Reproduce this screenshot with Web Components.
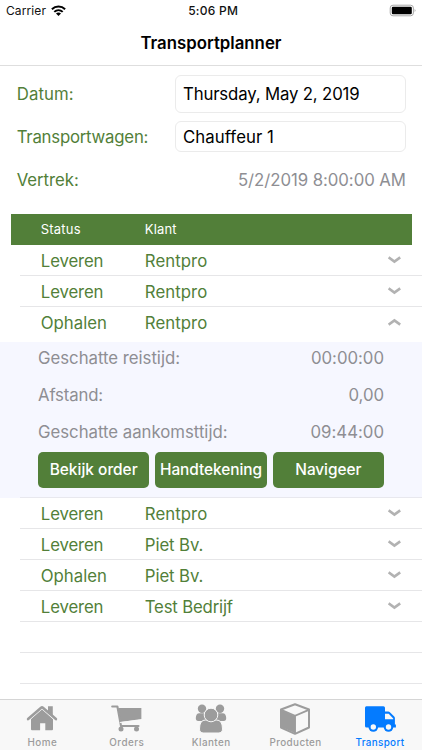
<!DOCTYPE html>
<html lang="nl">
<head>
<meta charset="utf-8">
<title>Transportplanner</title>
<style>
html,body{margin:0;height:100%;background:#fff;overflow:hidden}
body{font-family:Inter,"Liberation Sans",sans-serif}
</style>
</head>
<body>
<planner-app></planner-app>
<script>
// Text label whose tracking is adjusted to give the advance width in "w".
class TrackText extends HTMLElement{
  connectedCallback(){
    const r=this.attachShadow({mode:'open'});
    r.innerHTML='<style>:host{display:inline-block;white-space:nowrap}span{display:inline-block}</style><span></span>';
    const s=r.querySelector('span'),t=this.getAttribute('text');
    s.textContent=t;
    const w=parseFloat(this.getAttribute('w'));
    if(w){
      const gap=(w-s.getBoundingClientRect().width)/t.length;
      s.style.letterSpacing=gap.toFixed(3)+'px';
      s.style.marginRight=(-gap).toFixed(3)+'px';
    }
  }
}
const tt=(t,w)=>`<track-text text="${t}" w="${w}"></track-text>`;

class StatusBar extends HTMLElement{
  connectedCallback(){
    this.attachShadow({mode:'open'}).innerHTML=`<style>
    :host{display:grid;grid-template-columns:1fr auto 1fr;height:22px;line-height:22px;font-size:12px;color:#111;padding:0 5px 0 6px;box-sizing:border-box}
    .l{display:flex;align-items:center;gap:5px}.c{font-weight:500;margin-left:3px}.r{display:flex;justify-content:flex-end}
    svg{display:block}.l svg{margin-top:-2px}
    </style>
    <div class="l">${tt('Carrier',40)}<svg width="15" height="11" viewBox="0 0 15 11"><g fill="none" stroke="#000" stroke-width="2"><path d="M.9 4.3C4.6.7 10.4.7 14.1 4.3"/><path d="M3.3 6.9c2.4-2.3 6-2.3 8.4 0"/></g><path d="M5 8.5c1.4-1.3 3.6-1.3 5 0L7.5 11z"/></svg></div>
    <div class="c">${tt('5:06 PM',50)}</div>
    <div class="r"><svg width="28" height="22" viewBox="0 0 28 22"><rect x="1.2" y="5.2" width="23.2" height="10.6" rx="2.8" fill="#fff" stroke="#aaa"/><rect x="2.8" y="6.8" width="20" height="7.4" rx="1.2"/><path d="M25.7 8.8q1.7 1.6 0 3.4z" fill="#999"/></svg></div>`;
  }
}
class NavBar extends HTMLElement{
  connectedCallback(){
    this.attachShadow({mode:'open'}).innerHTML=`<style>:host{display:block;height:44px;box-sizing:border-box;border-bottom:1px solid #dedede;text-align:center;font-size:16.8px;font-weight:600;line-height:43px;color:#000}</style>${tt('Transportplanner',141)}`;
  }
}
class FormRow extends HTMLElement{
  connectedCallback(){
    const a=n=>this.getAttribute(n);
    this.attachShadow({mode:'open'}).innerHTML=`<style>
    :host{display:flex;justify-content:space-between;align-items:center;padding:0 16px 0 16.7px;color:#527f39;font-size:16.8px;line-height:24px}
    .box{box-sizing:border-box;width:231px;height:var(--h);border:1px solid #ebebeb;border-radius:6px;padding:0 7px;color:#000;display:flex;align-items:center;padding-bottom:var(--lift,1px)}
    .plain{color:#8e8e93}
    </style>${tt(a('label'),a('lw'))}<div class="${a('kind')}">${tt(a('value'),a('vw'))}</div>`;
  }
}
class TableHead extends HTMLElement{
  connectedCallback(){
    this.attachShadow({mode:'open'}).innerHTML=`<style>:host{display:grid;grid-template-columns:104px 1fr;margin:0 10.5px 0 10.5px;height:30.5px;line-height:31px;padding-left:30.3px;background:#527f39;color:#fff;font-size:13px;margin-bottom:.4px}</style>${tt('Status',40)}${tt('Klant',32)}`;
  }
}
class OrderRow extends HTMLElement{
  connectedCallback(){
    const a=n=>this.getAttribute(n),up=this.hasAttribute('open');
    this.attachShadow({mode:'open'}).innerHTML=`<style>
    :host{display:grid;grid-template-columns:104px 1fr 14px;height:30.9px;box-sizing:border-box;margin-left:20px;padding:0 21px 0 20.8px;border-bottom:1px solid #e6e6e8;color:#527f39;font-size:16.8px;line-height:32px}
    :host([open]){height:35.7px;border:0}
    :host([blank]){display:block}
    svg{margin:9px 0 0 .5px}
    </style>${a('status')?tt(a('status'),a('sw'))+tt(a('client'),a('cw'))+`<svg width="13" height="12" viewBox="0 0 13 12"><path d="${up?'M.6 8.6L6.4 4.4l5.8 4.2':'M.6 3.4L6.4 7.6l5.8-4.2'}" fill="none" stroke="#b2b2b2" stroke-width="2.6"/></svg>`:''}`;
  }
}
class DetailLine extends HTMLElement{
  connectedCallback(){
    const a=n=>this.getAttribute(n);
    this.attachShadow({mode:'open'}).innerHTML=`<style>:host{display:flex;justify-content:space-between;height:36.7px;line-height:32px;font-size:16.8px;color:#8e8e93}</style>${tt(a('label'),a('lw'))}${tt(a('value'),a('vw'))}`;
  }
}
class ActionButton extends HTMLElement{
  connectedCallback(){
    this.attachShadow({mode:'open'}).innerHTML=`<style>:host{display:flex;justify-content:center;height:36px;line-height:36px;background:#527f39;color:#fff;border-radius:5px;font-size:15.4px;font-weight:550}</style>${tt(this.getAttribute('label'),this.getAttribute('w'))}`;
  }
}
class OrderDetail extends HTMLElement{
  connectedCallback(){
    this.attachShadow({mode:'open'}).innerHTML=`<style>:host{display:block;box-sizing:border-box;height:156px;background:linear-gradient(#e8e8ee,#e8e8ee) 20px 155px/100% 1px no-repeat,#f6f7ff;padding:0 38px}
    .b{display:grid;grid-template-columns:repeat(3,1fr);gap:6px}</style><slot></slot><div class="b"><slot name="actions"></slot></div>`;
  }
}
const icons={
home:'<path d="M5 17L16 7.5 27 17v10.2q0 1-1 1h-6.7v-7h-5.2v7H6q-1 0-1-1z"/><path d="M1.8 16.8L14.8 5.2q1.2-.8 2.4 0l12.8 11.6" fill="none" stroke="#f8f8f8" stroke-width="4.4"/><path d="M22 4.2h4.8v10.3L22 10z"/><path d="M2.1 17.1L15.1 5.8q.9-.7 1.8 0l13 11.3" fill="none" stroke="currentColor" stroke-width="2.6" stroke-linecap="round"/>',
cart:'<path d="M7.2 6h23.2v11L9.5 20z"/><path d="M1.2 4.5h5.2L10 24h17.5" fill="none" stroke="currentColor" stroke-width="2.1" stroke-linecap="round" stroke-linejoin="round"/><path d="M8.8 20.5l20-2.2" stroke="#f8f8f8" stroke-width="1.1"/><circle cx="10" cy="27" r="2.5"/><circle cx="25.5" cy="27" r="2.5"/>',
users:'<circle cx="7" cy="6.7" r="4.2"/><circle cx="25" cy="6.7" r="4.2"/><path d="M4.5 11.2Q1 11 .8 16q-.1 3 2.5 3H13v-7.8zM27.5 11.2q3.5-.2 3.7 4.8.1 3-2.5 3H19v-7.8z"/><g stroke="#f8f8f8" stroke-width="1"><path d="M10.8 18Q4.5 17.8 4.5 27q0 4 4.3 4h14.4q4.3 0 4.3-4 0-9.2-6.3-9z"/><circle cx="16" cy="13" r="6.8"/></g>',
box:'<path d="M16 2.2l14 5.3v18l-14 6.3L2 25.5v-18z" fill="none" stroke="currentColor" stroke-width="2" stroke-linejoin="round"/><path d="M2 8l14 6.3V31L2 25z"/><path d="M2.2 7.8L16 13.8 29.8 7.8M16 14v17" fill="none" stroke="currentColor" stroke-width="1.9"/>',
truck:'<path fill-rule="evenodd" d="M2.4 4.2h17q1.6 0 1.6 1.6v3.7h3.2q1 0 1.7.7l4.3 4.4q.7.7.7 1.7v6.2h1v3H2.6q-1.6 0-1.6-1.6V5.8q0-1.6 1.4-1.6zM21 11.7v5.6h8.2v-.9l-4.5-4.7z"/><circle cx="9.3" cy="25" r="4.8"/><circle cx="24.5" cy="25" r="4.8"/><g fill="#f8f8f8"><circle cx="9.3" cy="25" r="2.7"/><circle cx="24.5" cy="25" r="2.7"/></g>'};
class TabItem extends HTMLElement{
  connectedCallback(){
    const a=n=>this.getAttribute(n);
    this.attachShadow({mode:'open'}).innerHTML=`<style>:host{display:flex;flex-direction:column;align-items:center;color:#9c9c9c;font-size:9.9px;font-weight:500;line-height:14px;padding-top:2px}:host([active]){color:#047bff;font-weight:550}svg{display:block;fill:currentColor;margin-bottom:.4px}</style><svg width="32" height="33" viewBox="0 0 32 33">${icons[a('icon')]}</svg>${tt(a('label'),a('w'))}`;
  }
}
class TabBar extends HTMLElement{
  connectedCallback(){
    this.attachShadow({mode:'open'}).innerHTML=`<style>:host{display:grid;grid-template-columns:repeat(5,1fr);box-sizing:border-box;height:51px;border-top:1px solid #d5d5d5;background:#f8f8f8}</style><slot></slot>`;
  }
}
class PlannerApp extends HTMLElement{
  connectedCallback(){
    const row=(s,sw,c,cw,x='')=>`<order-row status="${s}" sw="${sw}" client="${c}" cw="${cw}" ${x}></order-row>`;
    this.attachShadow({mode:'open'}).innerHTML=`<style>
    :host{display:flex;flex-direction:column;height:750px;width:422px;overflow:hidden;background:#fff}
    .form{padding-top:9px;height:139px}
    .date{--h:38px}.driver{--h:31px;--lift:0px;margin-top:8px}.dep{margin-top:16px}
    .list{flex:1;min-height:0}
    </style>
    <status-bar></status-bar><nav-bar></nav-bar>
    <div class="form">
    <form-row class="date" label="Datum:" lw="57" value="Thursday, May 2, 2019" vw="176.5" kind="box"></form-row>
    <form-row class="driver" label="Transportwagen:" lw="131.5" value="Chauffeur 1" vw="91" kind="box"></form-row>
    <form-row class="dep" label="Vertrek:" lw="62" value="5/2/2019 8:00:00 AM" vw="168" kind="plain"></form-row>
    </div>
    <table-head></table-head>
    <div class="list">
    ${row('Leveren',62.5,'Rentpro',62.5)}${row('Leveren',62.5,'Rentpro',62.5)}${row('Ophalen',66,'Rentpro',62.5,'open')}
    <order-detail>
      <detail-line label="Geschatte reistijd:" lw="142" value="00:00:00" vw="73"></detail-line>
      <detail-line label="Afstand:" lw="65" value="0,00" vw="35.5"></detail-line>
      <detail-line label="Geschatte aankomsttijd:" lw="189.5" value="09:44:00" vw="73.5"></detail-line>
      <action-button slot="actions" label="Bekijk order" w="88"></action-button>
      <action-button slot="actions" label="Handtekening" w="102"></action-button>
      <action-button slot="actions" label="Navigeer" w="66"></action-button>
    </order-detail>
    ${row('Leveren',62.5,'Rentpro',62.5)}${row('Leveren',62.5,'Piet Bv.',58.5)}${row('Ophalen',66,'Piet Bv.',58.5)}${row('Leveren',62.5,'Test Bedrijf',88)}
    <order-row blank></order-row><order-row blank></order-row>
    </div>
    <tab-bar>
    <tab-item icon="home" label="Home" w="30"></tab-item><tab-item icon="cart" label="Orders" w="35"></tab-item><tab-item icon="users" label="Klanten" w="39"></tab-item><tab-item icon="box" label="Producten" w="52"></tab-item><tab-item icon="truck" label="Transport" w="49" active></tab-item>
    </tab-bar>`;
  }
}
for(const [n,c] of Object.entries({'track-text':TrackText,'status-bar':StatusBar,'nav-bar':NavBar,'form-row':FormRow,'table-head':TableHead,'order-row':OrderRow,'detail-line':DetailLine,'action-button':ActionButton,'order-detail':OrderDetail,'tab-item':TabItem,'tab-bar':TabBar,'planner-app':PlannerApp}))customElements.define(n,c);
</script>
</body>
</html>
